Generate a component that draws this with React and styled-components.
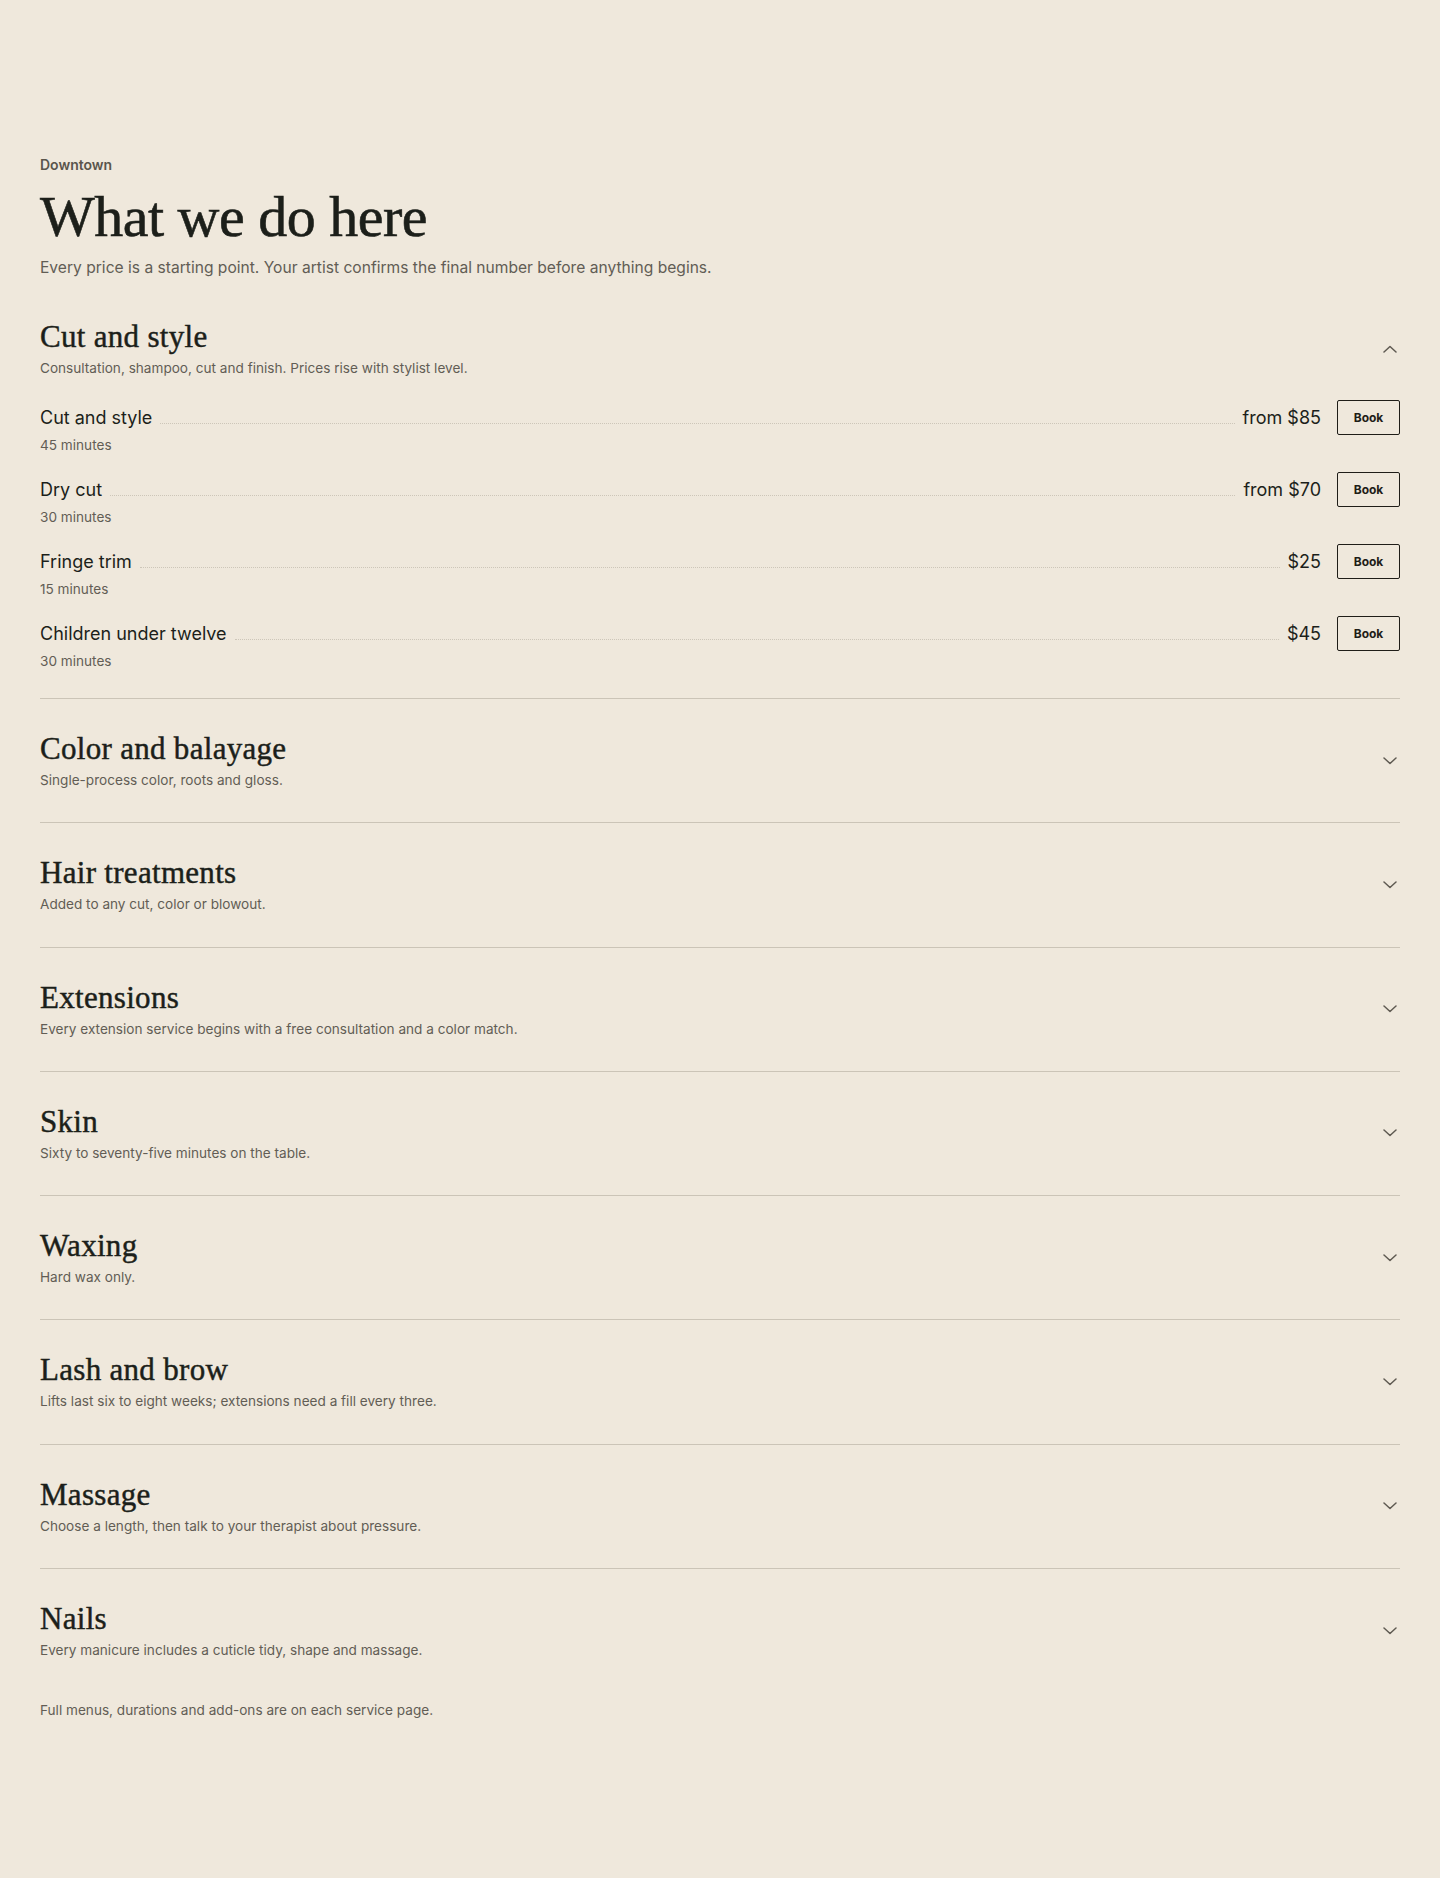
import React, { useState } from "react";
import styled, { createGlobalStyle } from "styled-components";

const GlobalStyle = createGlobalStyle`
  body {
    margin: 0;
    background: #efe8dc;
    font-family: Inter, "Noto Sans", sans-serif;
    color: #1c1f1a;
  }
`;

const sections = [
  {
    title: "Cut and style",
    desc: "Consultation, shampoo, cut and finish. Prices rise with stylist level.",
    items: [
      { name: "Cut and style", time: "45 minutes", price: "from $85" },
      { name: "Dry cut", time: "30 minutes", price: "from $70" },
      { name: "Fringe trim", time: "15 minutes", price: "$25" },
      { name: "Children under twelve", time: "30 minutes", price: "$45" },
    ],
  },
  { title: "Color and balayage", desc: "Single-process color, roots and gloss." },
  { title: "Hair treatments", desc: "Added to any cut, color or blowout." },
  {
    title: "Extensions",
    desc: "Every extension service begins with a free consultation and a color match.",
  },
  { title: "Skin", desc: "Sixty to seventy-five minutes on the table." },
  { title: "Waxing", desc: "Hard wax only." },
  {
    title: "Lash and brow",
    desc: "Lifts last six to eight weeks; extensions need a fill every three.",
  },
  {
    title: "Massage",
    desc: "Choose a length, then talk to your therapist about pressure.",
  },
  { title: "Nails", desc: "Every manicure includes a cuticle tidy, shape and massage." },
];

const Chevron = ({ up }) => (
  <svg width="14" height="8" viewBox="0 0 14 8" fill="none">
    <path
      d={up ? "M1 7L7 1.5L13 7" : "M1 1L7 6.5L13 1"}
      stroke="#5f5a52"
      strokeWidth="1.5"
      strokeLinecap="round"
      strokeLinejoin="round"
    />
  </svg>
);

export default function App() {
  const [open, setOpen] = useState({ 0: true });

  return (
    <Page>
      <GlobalStyle />
      <Eyebrow>Downtown</Eyebrow>
      <Title>What we do here</Title>
      <Lead>
        Every price is a starting point. Your artist confirms the final number
        before anything begins.
      </Lead>

      <List>
        {sections.map((s, i) => {
          const isOpen = !!open[i] && s.items;
          return (
            <Section key={s.title} $open={isOpen}>
              <Header onClick={() => setOpen({ ...open, [i]: !open[i] })}>
                <div>
                  <SectionTitle>{s.title}</SectionTitle>
                  <SectionDesc>{s.desc}</SectionDesc>
                </div>
                <Toggle>
                  <Chevron up={isOpen} />
                </Toggle>
              </Header>
              {isOpen && (
                <Items>
                  {s.items.map((it) => (
                    <Item key={it.name}>
                      <Row>
                        <ItemName>{it.name}</ItemName>
                        <Leader />
                        <Price>{it.price}</Price>
                        <BookButton>Book</BookButton>
                      </Row>
                      <Duration>{it.time}</Duration>
                    </Item>
                  ))}
                </Items>
              )}
            </Section>
          );
        })}
      </List>

      <Footnote>Full menus, durations and add-ons are on each service page.</Footnote>
    </Page>
  );
}

const Page = styled.main`
  padding: 156px 40px 150px;
`;

const Eyebrow = styled.div`
  font-size: 14px;
  line-height: 18px;
  font-weight: 600;
  color: #5a554c;
`;

const Title = styled.h1`
  margin: 12px 0 0;
  font-family: "Liberation Serif", serif;
  font-weight: 400;
  font-size: 58px;
  line-height: 62px;
  letter-spacing: -0.5px;
  -webkit-text-stroke: 0.6px #1c1f1a;
  color: #1c1f1a;
`;

const Lead = styled.p`
  margin: 8px 0 0;
  font-size: 15.6px;
  line-height: 24px;
  color: #625d55;
`;

const List = styled.div`
  margin-top: 7px;
`;

const Section = styled.section`
  padding: 32px 0 ${(p) => (p.$open ? 27 : 32.3)}px;
  & + & {
    border-top: 1px solid #cbc4b7;
  }
`;

const Header = styled.div`
  display: flex;
  align-items: center;
  justify-content: space-between;
  cursor: pointer;
`;

const SectionTitle = styled.h2`
  margin: 0;
  font-family: "Liberation Serif", serif;
  font-weight: 400;
  font-size: 31px;
  line-height: 36px;
  letter-spacing: 0.3px;
  -webkit-text-stroke: 0.45px #1c1f1a;
  color: #1c1f1a;
`;

const SectionDesc = styled.p`
  margin: 3px 0 0;
  font-size: 13.6px;
  line-height: 20px;
  color: #625d55;
`;

const Toggle = styled.button`
  display: flex;
  align-items: center;
  justify-content: center;
  width: 24px;
  height: 24px;
  padding: 0;
  margin-right: -2px;
  border: 0;
  background: none;
  cursor: pointer;
`;

const Items = styled.div`
  margin-top: 22px;
  display: flex;
  flex-direction: column;
  gap: 17px;
`;

const Item = styled.div``;

const Row = styled.div`
  display: flex;
  align-items: center;
  height: 35px;
`;

const ItemName = styled.span`
  font-size: 18px;
  line-height: 26px;
  color: #1c1f1a;
`;

const Leader = styled.span`
  flex: 1;
  align-self: center;
  margin: 12px 8px 0;
  border-top: 1px dotted #cdc6b9;
`;

const Price = styled.span`
  font-size: 18px;
  line-height: 26px;
  color: #1c1f1a;
`;

const BookButton = styled.button`
  margin-left: 16px;
  width: 63px;
  height: 35px;
  border: 1.5px solid #1f1d18;
  border-radius: 2px;
  background: transparent;
  font-family: Inter, sans-serif;
  font-size: 12px;
  font-weight: 700;
  color: #1f1d18;
  cursor: pointer;
`;

const Duration = styled.div`
  font-size: 13.6px;
  line-height: 20px;
  color: #625d55;
`;

const Footnote = styled.p`
  margin: 8px 0 0;
  font-size: 13.6px;
  line-height: 20px;
  color: #625d55;
`;
